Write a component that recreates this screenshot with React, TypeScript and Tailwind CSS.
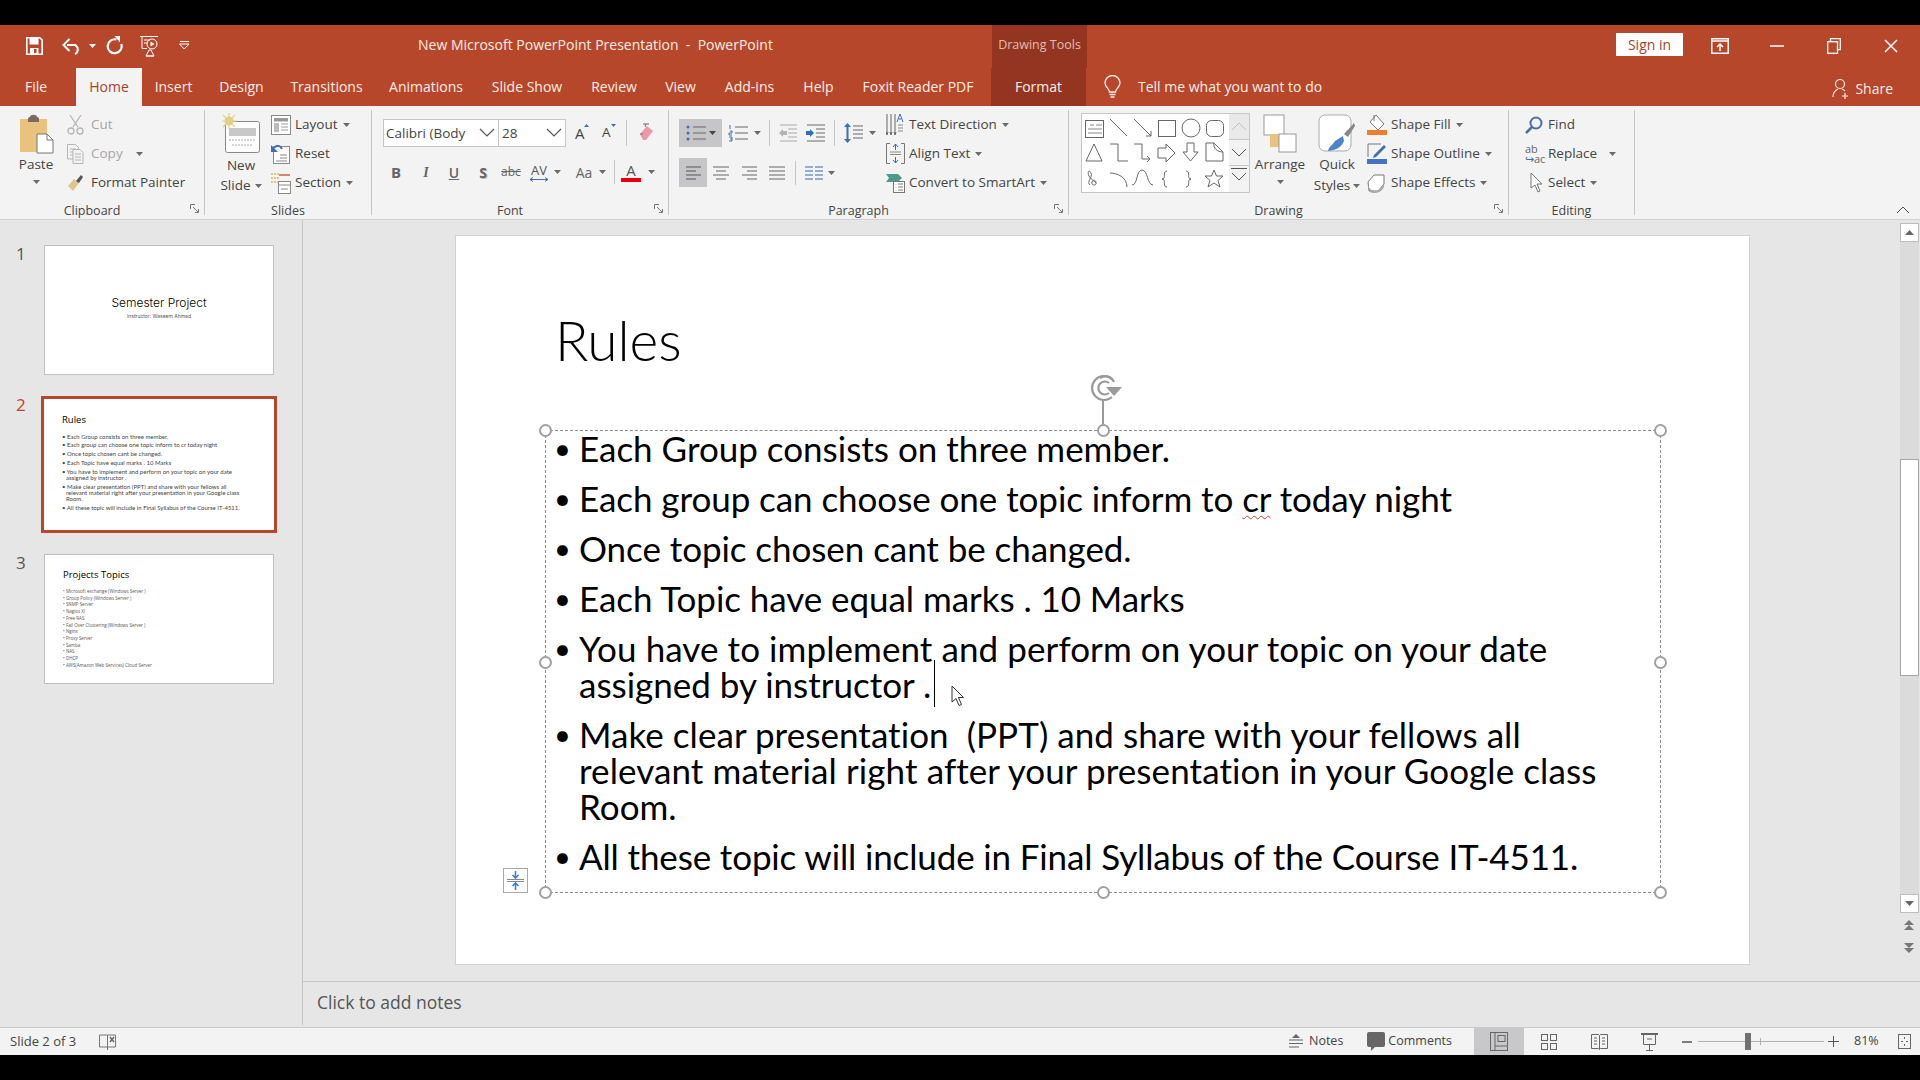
const stroke = "#6a6a6a";

function Caret({ color = "#6a6a6a" }: { color?: string }) {
  return (
    <svg width="7" height="4" viewBox="0 0 7 4" className="shrink-0">
      <path d="M0 0h7L3.5 4z" fill={color} />
    </svg>
  );
}

function Chevron() {
  return (
    <svg width="16" height="10" viewBox="0 0 16 10" className="shrink-0">
      <path d="M1 1l7 7 7-7" fill="none" stroke="#555" strokeWidth="1.2" />
    </svg>
  );
}

function Launcher() {
  return (
    <svg width="10" height="10" viewBox="0 0 10 10" className="absolute right-[4px] top-[3px]">
      <path d="M.5 5V.5H5M3 3l5 5M8.5 5v3.5H5" fill="none" stroke="#777" strokeWidth="1" />
    </svg>
  );
}

function Item({ icon, label, caret, muted, w = "w-[24px]", className = "" }: { icon: React.ReactNode; label: string; caret?: boolean; muted?: boolean; w?: string; className?: string }) {
  return (
    <div className={`h-[29px] flex items-center whitespace-nowrap ${className}`}>
      <div className={`${w} shrink-0 flex items-center`}>{icon}</div>
      <span className={muted ? "text-[#a6a6a6]" : ""}>{label}</span>
      {caret && <span className="ml-[5px]"><Caret /></span>}
    </div>
  );
}

function Group({ w, label, launcher, children }: { w: string; label: string; launcher?: boolean; children: React.ReactNode }) {
  return (
    <div className={`${w} h-[105px] shrink-0 flex flex-col border-r border-[#c6c6c6]`}>
      <div className="h-[91px] flex">{children}</div>
      <div className={`relative h-[14px] pt-[1px] leading-[17px] text-center text-[12.5px] text-[#444] ${launcher ? "pr-[20px]" : ""}`}>
        {label}
        {launcher && <Launcher />}
      </div>
    </div>
  );
}

function Tab({ label, w, className = "text-[#fbeee9]" }: { label: string; w: string; className?: string }) {
  return <div className={`${w} h-full shrink-0 flex items-center justify-center whitespace-nowrap ${className}`}>{label}</div>;
}

function Handle({ className }: { className: string }) {
  return <div className={`absolute w-[13px] h-[13px] rounded-full bg-white border-[2.5px] border-[#a0a0a0] ${className}`} />;
}

function ParaBtn({ children, className = "" }: { children: React.ReactNode; className?: string }) {
  return <div className={`flex items-center justify-center shrink-0 ${className}`}>{children}</div>;
}

function Gallery() {
  return (
    <svg width="147" height="78" viewBox="0 3 147 78" className="bg-white">
      <g fill="none" stroke="#666" strokeWidth="1">
        <rect x="3.5" y="9.5" width="18" height="17" />
        <path d="M8 14h4M14 14h6M6 18h14M6 22h14" stroke="#888" />
        <path d="M28 8l17 17" />
        <path d="M52 8l17 17M69 25v-5M69 25h-5" />
        <rect x="76.5" y="9.5" width="17" height="16" />
        <circle cx="109" cy="17" r="9" />
        <rect x="124.5" y="9.5" width="17" height="16" rx="5" />
        <g transform="translate(0,-6)">
          <path d="M12 39l8 17H4z" />
          <path d="M28 39h8v17h10" />
          <path d="M52 39h8v15h8M68 54l-3-3M68 54l-3 3" />
          <path d="M76 43h8v-4l9 9-9 9v-4h-8z" />
          <path d="M105 38h7v9h4l-7.500 9-7.500-9h4z" />
          <path d="M124 38h8l9 9v9h-17zM132 38c-1 5 3 9 9 9" />
        </g>
        <path d="M8 74c-4-3 3-8 1-12s-4-1-2 3 8 6 7 8-5 1-4-2 4-2 4 1" />
        <path d="M28 62c7 0 17 4 17 14" />
        <path d="M50 74c6 0 4-15 10-15s5 15 11 15" />
        <path d="M85 60c-4 0-2 6-3 7l-2 1 2 1c1 1-1 7 3 7" />
        <path d="M104 60c4 0 2 6 3 7l2 1-2 1c-1 1 1 7-3 7" />
        <path d="M132 59l2.500 6h6.500l-5 4.500 2 6.500-6-4-6 4 2-6.500-5-4.500h6.500z" />
      </g>
    </svg>
  );
}

const slide2Lines = [
  ["Each Group consists on three member.", "-mt-[1px]"],
  ["Each group can choose one topic inform to cr today night", "mt-[14px] tracking-[-0.06px]"],
  ["Once topic chosen cant be changed.", "mt-[14px] tracking-[-0.06px]"],
  ["Each Topic have equal marks . 10 Marks", "mt-[13.500px] tracking-[-0.06px]"],
  ["You have to implement and perform on your topic on your date", "mt-[14px] tracking-[0.08px]"],
  ["assigned by instructor .", "pl-[5px]"],
  ["Make clear presentation  (PPT) and share with your fellows all", "mt-[14px] tracking-[0.05px]"],
  ["relevant material right after your presentation in your Google class", "pl-[5px] tracking-[0.09px]"],
  ["Room.", "pl-[5px]"],
  ["All these topic will include in Final Syllabus of the Course IT-4511.", "mt-[14px] tracking-[-0.14px]"],
];

const slide3Lines = [
  "Microsoft exchange (Windows Server )",
  "Group Policy (Windows Server )",
  "SNMP Server",
  "Nagios XI",
  "Free RAS",
  "Fail Over Clustering (Windows Server )",
  "Nginx",
  "Proxy Server",
  "Samba",
  "NAS",
  "DHCP",
  "AWS(Amazon Web Services) Cloud Server",
];

function BodyLine({ text }: { text: string }) {
  if (text.includes(" cr ")) {
    const [a, b] = text.split(" cr ");
    return (
      <>
        {a} <span className="underline decoration-wavy decoration-[#d9403a] decoration-1 underline-offset-[3px]">cr</span> {b}
      </>
    );
  }
  return <>{text}</>;
}

export default function App() {
  return (
    <div className="w-[1920px] h-[1080px] overflow-hidden bg-black flex flex-col font-['Open_Sans',sans-serif] text-[13.5px] text-[#444]">
      <div className="h-[25px] shrink-0" />

      {/* title bar */}
      <div className="h-[43px] shrink-0 bg-[#b7472a] flex text-[#fbeee9]">
        <div className="w-[418px] shrink-0 flex items-center pl-[26px] pb-[2px]">
          <svg width="17" height="18" viewBox="0 0 17 18">
            <path d="M.8.8h13l2.400 2.400v14H.8z" fill="none" stroke="#fff" strokeWidth="1.600" />
            <path d="M3.500 1v6.500h9V1zM4 17v-6h8.500v6z" fill="#fff" />
            <rect x="8" y="12" width="2.500" height="4" fill="#b7472a" />
          </svg>
          <svg width="20" height="18" viewBox="0 0 20 18" className="ml-[19px]">
            <path d="M5 8h8a5 5 0 0 1 0 9" fill="none" stroke="#fff" strokeWidth="2" />
            <path d="M7.500 2L1.500 8l6 6" fill="none" stroke="#fff" strokeWidth="2" />
          </svg>
          <span className="ml-[7px]"><Caret color="#fff" /></span>
          <svg width="17" height="19" viewBox="0 0 17 19" className="ml-[10px]">
            <path d="M10.500 3.500A7 7 0 1 0 15.300 8" fill="none" stroke="#fff" strokeWidth="2.200" />
            <path d="M8.500 0h5.500v6.500z" fill="#fff" />
          </svg>
          <svg width="21" height="22" viewBox="0 0 21 22" className="ml-[16px]">
            <g fill="none" stroke="#fff" strokeWidth="1">
              <path d="M1 1.500h18M3 1.500v12h5M5 5h6M5 8h3" />
              <circle cx="13" cy="9" r="5" />
              <path d="M7 21l3-6h2l3 6zM7 21h8" />
            </g>
            <path d="M11.500 6.500v5l4-2.500z" fill="#fff" />
          </svg>
          <svg width="11" height="9" viewBox="0 0 11 9" className="ml-[19px]">
            <path d="M.5 3h9.500L5.250 8zM1 .5h9" fill="none" stroke="#fff" strokeWidth="1" />
          </svg>
        </div>
        <div className="w-[574px] shrink-0 flex items-center pb-[4px] text-[14px] whitespace-pre">New Microsoft PowerPoint Presentation  -  PowerPoint</div>
        <div className="w-[95px] shrink-0 bg-[#943522] flex items-center justify-center pb-[2px] text-[12.5px] text-[#e2bcae] whitespace-nowrap">Drawing Tools</div>
        <div className="flex-1" />
        <div className="w-[67px] h-[23px] mt-[8px] shrink-0 bg-white flex items-center justify-center pb-[1px] text-[14px] text-[#a8412c]">Sign in</div>
        <div className="w-[57px] ml-[8px] shrink-0 flex items-center justify-center pb-[2px]">
          <svg width="18" height="16" viewBox="0 0 18 16">
            <rect x=".75" y=".75" width="16.500" height="14.500" fill="none" stroke="#fff" strokeWidth="1.500" />
            <path d="M1 3h16" stroke="#fff" strokeWidth="1.500" />
            <path d="M9 13V6M6 9l3-3 3 3" fill="none" stroke="#fff" strokeWidth="1.500" />
          </svg>
        </div>
        <div className="w-[57px] shrink-0 flex items-center justify-center pb-[2px]">
          <svg width="14" height="2" viewBox="0 0 14 2"><path d="M0 1h14" stroke="#fff" strokeWidth="1.500" /></svg>
        </div>
        <div className="w-[57px] shrink-0 flex items-center justify-center pb-[2px]">
          <svg width="14" height="16" viewBox="0 0 14 16">
            <path d="M3.500 3V.7h9.800v11H10" fill="none" stroke="#fff" strokeWidth="1.300" />
            <rect x=".7" y="3.700" width="9.800" height="11.600" fill="none" stroke="#fff" strokeWidth="1.300" />
          </svg>
        </div>
        <div className="w-[58px] shrink-0 flex items-center justify-center pb-[2px]">
          <svg width="14" height="14" viewBox="0 0 14 14"><path d="M1 1l12 12M13 1L1 13" stroke="#fff" strokeWidth="1.500" /></svg>
        </div>
      </div>

      {/* ribbon tabs */}
      <div className="h-[38px] shrink-0 bg-[#b7472a] flex items-center text-[14px]">
        <Tab label="File" w="w-[76px]" className="text-[#fbeee9] pr-[4px] pb-[1px]" />
        <Tab label="Home" w="w-[66px]" className="bg-[#f3f3f3] text-[#a8412c] pb-[1px]" />
        <Tab label="Insert" w="w-[63px]" className="text-[#fbeee9] pb-[1px]" />
        <Tab label="Design" w="w-[73px]" className="text-[#fbeee9] pb-[1px]" />
        <Tab label="Transitions" w="w-[97px]" className="text-[#fbeee9] pb-[1px]" />
        <Tab label="Animations" w="w-[102px]" className="text-[#fbeee9] pb-[1px]" />
        <Tab label="Slide Show" w="w-[100px]" className="text-[#fbeee9] pb-[1px]" />
        <Tab label="Review" w="w-[74px]" className="text-[#fbeee9] pb-[1px]" />
        <Tab label="View" w="w-[59px]" className="text-[#fbeee9] pb-[1px]" />
        <Tab label="Add-ins" w="w-[79px]" className="text-[#fbeee9] pb-[1px]" />
        <Tab label="Help" w="w-[59px]" className="text-[#fbeee9] pb-[1px]" />
        <Tab label="Foxit Reader PDF" w="w-[143px]" className="text-[#fbeee9] pr-[3px] pb-[1px]" />
        <Tab label="Format" w="w-[95px]" className="bg-[#943522] text-[#fbeee9] pb-[1px]" />
        <svg width="17" height="24" viewBox="0 0 17 24" className="ml-[18px] shrink-0">
          <path d="M5.500 17c0-3-4.500-5-4.500-9a7.500 7.500 0 0 1 15 0c0 4-4.500 6-4.500 9z" fill="none" stroke="#fbeee9" strokeWidth="1.300" />
          <path d="M5.500 19.500h6M6.500 22h4" stroke="#fbeee9" strokeWidth="1.600" />
        </svg>
        <span className="ml-[17px] pb-[1px] text-[#fbeee9] whitespace-nowrap">Tell me what you want to do</span>
        <div className="flex-1" />
        <svg width="18" height="22" viewBox="0 0 18 22" className="shrink-0 mt-[3px]">
          <g fill="none" stroke="#fbeee9" strokeWidth="1.200">
            <circle cx="8" cy="6" r="4.500" />
            <path d="M1 19c0-5 3-7 5-8M10 11c1 .4 2 1 3 2M13 15v6M10 18h6" />
          </g>
        </svg>
        <span className="ml-[5px] mr-[27px] mt-[3px] text-[#fbeee9]">Share</span>
      </div>

      {/* ribbon */}
      <div className="h-[114px] shrink-0 bg-[#f3f3f3] border-b border-[#d2d2d2] pt-[4px] flex relative">
        <Group w="w-[205px]" label="Clipboard" launcher>
          <div className="w-[48px] ml-[12px] shrink-0 flex flex-col items-center">
            <svg width="35" height="40" viewBox="0 0 35 40" className="mt-[4px]">
              <rect x="1" y="5" width="27" height="33" fill="#e9c27d" />
              <path d="M9 5c0-2 2-2 2-2 0-3 7-3 7 0 0 0 2 0 2 2v3H9z" fill="#7c6a5c" />
              <path d="M18 20h10l6 6v13H18z" fill="#fff" stroke="#777" />
              <path d="M28 20v6h6" fill="none" stroke="#777" />
            </svg>
            <div className="h-[21px] leading-[21px]">Paste</div>
            <div className="mt-[5px]"><Caret /></div>
          </div>
          <div className="ml-[7px] flex flex-col">
            <Item muted label="Cut" icon={
              <svg width="17" height="21" viewBox="0 0 17 21"><g fill="none" stroke="#b5b5b5" strokeWidth="1.300"><path d="M3 1l8 12M14 1L6 13" /><circle cx="4" cy="17" r="3" /><circle cx="13" cy="17" r="3" /></g></svg>
            } />
            <Item muted label="Copy" icon={
              <svg width="17" height="20" viewBox="0 0 17 20"><g fill="none" stroke="#b5b5b5"><path d="M.5.500h8l3 3V15H.5zM3 5h6M3 8h6M3 11h6" /><path d="M6 5.500h7l3 3v11H6z" fill="#f3f3f3" /><path d="M8 10h6M8 13h6M8 16h6" /></g></svg>
            } className="[&>span:nth-child(3)]:ml-[13px]" caret />
            <Item label="Format Painter" icon={
              <svg width="17" height="17" viewBox="0 0 17 17"><path d="M1 12l6-7 5 4-6 8z" fill="#dcc983" /><path d="M9 7l5-6 2 2-4 6z" fill="#555" /></svg>
            } />
          </div>
        </Group>

        <Group w="w-[167px]" label="Slides">
          <div className="w-[48px] ml-[12px] shrink-0 flex flex-col items-center">
            <svg width="38" height="41" viewBox="0 0 38 41" className="mt-[3px]">
              <rect x="3.500" y="8.500" width="34" height="31" rx="2" fill="#fff" stroke="#888" />
              <rect x="7" y="15" width="27" height="8" fill="#c8c8c8" />
              <path d="M7 27h27M10 32h21" stroke="#aaa" strokeDasharray="2 1" />
              <circle cx="7" cy="8" r="4.500" fill="#e3cf85" />
              <path d="M7 0v16M-1 8h16M1 2l12 12M13 2L1 14" stroke="#e3cf85" strokeWidth="1.200" />
            </svg>
            <div className="h-[20px] leading-[20px] mt-[1px]">New</div>
            <div className="h-[21px] leading-[21px] flex items-center whitespace-nowrap">Slide<span className="ml-[4px]"><Caret /></span></div>
          </div>
          <div className="ml-[6px] flex flex-col">
            <Item label="Layout" caret icon={
              <svg width="20" height="20" viewBox="0 0 20 20"><rect x=".5" y=".5" width="19" height="19" fill="#fff" stroke="#888" /><rect x="3" y="3" width="14" height="3.500" fill="#999" /><rect x="3" y="8" width="5" height="9" fill="#bbb" /><path d="M10 9h7M10 12h7M10 15h7" stroke="#999" /></svg>
            } />
            <Item label="Reset" icon={
              <svg width="19" height="21" viewBox="0 0 19 21"><rect x="2.500" y="3.500" width="16" height="17" fill="#fff" stroke="#888" /><path d="M9 12h7M9 15h7M5 18h11" stroke="#888" /><path d="M11 6C9 2 5 2 3 5" fill="none" stroke="#3f6fb0" strokeWidth="2" /><path d="M0 2v7h7z" fill="#3f6fb0" /></svg>
            } />
            <Item label="Section" caret icon={
              <svg width="20" height="22" viewBox="0 0 20 22"><path d="M0 2h8M0 6h8M0 10h8" stroke="#e3c58b" strokeWidth="2" strokeDasharray="2 1" /><path d="M8 3h11" stroke="#d0603a" strokeWidth="1.500" /><rect x="7.500" y="9.500" width="12" height="12" fill="#fff" stroke="#888" /><path d="M7 13h12M10 17h7" stroke="#888" /></svg>
            } />
          </div>
        </Group>

        <Group w="w-[297px]" label="Font" launcher>
          <div className="flex flex-col pl-[11px]">
            <div className="flex items-center mt-[9px] h-[28px]">
              <div className="w-[116px] h-[28px] bg-white border border-[#c6c6c6] flex items-center justify-between pl-[2px] pr-[3px] text-[13.5px] whitespace-nowrap overflow-hidden">
                Calibri (Body<Chevron />
              </div>
              <div className="w-[67px] h-[28px] bg-white border border-l-0 border-[#c6c6c6] flex items-center justify-between pl-[3px] pr-[3px]">
                28<Chevron />
              </div>
              <div className="w-[13px] ml-[9px] text-[15px] leading-none relative">A<span className="absolute -right-[1px] top-[-2px]"><svg width="5" height="3" viewBox="0 0 5 3"><path d="M0 3h5L2.500 0z" fill="#3f6fb0" /></svg></span></div>
              <div className="w-[13px] ml-[14px] text-[13.5px] leading-none relative">A<span className="absolute -right-[1px] top-[-2px]"><svg width="5" height="3" viewBox="0 0 5 3"><path d="M0 0h5L2.500 3z" fill="#3f6fb0" /></svg></span></div>
              <div className="w-px h-[26px] bg-[#c6c6c6] ml-[11px]" />
              <svg width="18" height="20" viewBox="0 0 18 20" className="ml-[10px] shrink-0">
                <path d="M3 11l7-8 6 5-7 9H6z" fill="#ee97a6" />
                <path d="M3 11h3M8 4l1-3" stroke="#777" />
                <path d="M6 1h6" stroke="#666" />
              </svg>
            </div>
            <div className="flex items-center mt-[11px] h-[28px] text-[14px] font-bold text-[#666]">
              <div className="w-[14px] ml-[6px] text-center text-[15px]">B</div>
              <div className="w-[14px] ml-[16px] text-center italic font-semibold font-['Liberation_Serif',serif]">I</div>
              <div className="w-[14px] ml-[14px] text-center underline font-semibold">U</div>
              <div className="w-[14px] ml-[15px] text-center [text-shadow:1px_1px_0_#bbb]">S</div>
              <div className="w-[22px] ml-[10px] text-center line-through font-normal text-[12px]">abc</div>
              <div className="w-[18px] ml-[8px] relative text-center font-normal text-[13px] text-[#555] leading-[14px]">
                AV
                <svg width="18" height="5" viewBox="0 0 18 5" className="block"><path d="M0 2.500h18M3 .5l-3 2 3 2M15 .5l3 2-3 2" fill="none" stroke="#3f6fb0" /></svg>
              </div>
              <span className="ml-[6px]"><Caret /></span>
              <div className="w-[20px] ml-[13px] text-center font-normal text-[14px]">Aa</div>
              <span className="ml-[5px]"><Caret /></span>
              <div className="w-px h-[24px] bg-[#c6c6c6] ml-[8px]" />
              <div className="w-[20px] ml-[6px] text-center font-normal text-[15px] leading-[15px] text-[#555]">
                A
                <div className="h-[4px] w-[20px] bg-[#e8000b]" />
              </div>
              <span className="ml-[7px]"><Caret /></span>
            </div>
          </div>
        </Group>

        <Group w="w-[400px]" label="Paragraph" launcher>
          <div className="w-[217px] shrink-0 flex flex-col pl-[10px]">
            <div className="flex items-center mt-[9px] h-[28px]">
              <ParaBtn className="w-[43px] h-[28px] bg-[#c6c6c8] gap-[3px]">
                <svg width="20" height="18" viewBox="0 0 20 18">
                  <g fill="#3f6fb0"><circle cx="2" cy="3" r="1.500" /><circle cx="2" cy="9" r="1.500" /><circle cx="2" cy="15" r="1.500" /></g>
                  <path d="M7 3h13M7 9h13M7 15h13" stroke="#666" />
                </svg>
                <Caret color="#444" />
              </ParaBtn>
              <ParaBtn className="w-[36px] ml-[4px] gap-[6px]">
                <svg width="20" height="18" viewBox="0 0 20 18">
                  <path d="M2 1v4M2 7h2v2H1v2h3M1 13h3v4H1M2 15h2" stroke="#3f6fb0" fill="none" />
                  <path d="M7 3h13M7 9h13M7 15h13" stroke="#666" />
                </svg>
                <Caret />
              </ParaBtn>
              <div className="w-px h-[26px] bg-[#c6c6c6] ml-[7px]" />
              <svg width="18" height="18" viewBox="0 0 18 18" className="ml-[9px] shrink-0">
                <path d="M1 1h17M9 5h9M9 9h9M9 13h9M1 17h17" stroke="#aaa" />
                <path d="M0 9l4-4v2h4v4H4v2z" fill="#b3b3b3" />
              </svg>
              <svg width="19" height="18" viewBox="0 0 19 18" className="ml-[9px] shrink-0">
                <path d="M1 1h18M10 5h9M10 9h9M10 13h9M1 17h18" stroke={stroke} />
                <path d="M8 9L4 5v2H0v4h4v2z" fill="#2f6db5" />
              </svg>
              <div className="w-px h-[26px] bg-[#c6c6c6] ml-[9px]" />
              <svg width="19" height="22" viewBox="0 0 19 22" className="ml-[9px] shrink-0">
                <path d="M3.500 2v18" stroke="#3f6fb0" strokeWidth="2" />
                <path d="M0 5l3.500-4L7 5zM0 17l3.500 4L7 17z" fill="#3f6fb0" />
                <path d="M9 4h10M9 8h10M9 12h10M9 16h10" stroke="#666" />
              </svg>
              <span className="ml-[6px]"><Caret /></span>
            </div>
            <div className="flex items-center mt-[11px] h-[29px]">
              <ParaBtn className="w-[28px] h-[29px] bg-[#c6c6c8]">
                <svg width="15" height="14" viewBox="0 0 15 14"><path d="M0 1h15M0 5h10M0 9h15M0 13h10" stroke="#555" /></svg>
              </ParaBtn>
              <svg width="16" height="14" viewBox="0 0 16 14" className="ml-[6px] shrink-0"><path d="M0 1h16M3 5h10M0 9h16M3 13h10" stroke="#666" /></svg>
              <svg width="15" height="14" viewBox="0 0 15 14" className="ml-[13px] shrink-0"><path d="M0 1h15M5 5h10M0 9h15M5 13h10" stroke="#666" /></svg>
              <svg width="16" height="14" viewBox="0 0 16 14" className="ml-[12px] shrink-0"><path d="M0 1h16M0 5h16M0 9h16M0 13h16" stroke="#666" /></svg>
              <div className="w-px h-[24px] bg-[#c6c6c6] ml-[10px]" />
              <svg width="18" height="14" viewBox="0 0 18 14" className="ml-[9px] shrink-0"><path d="M0 1h8M0 5h8M0 9h8M0 13h8M10 1h8M10 5h8M10 9h8M10 13h8" stroke="#2f6db5" /></svg>
              <span className="ml-[5px]"><Caret /></span>
            </div>
          </div>
          <div className="flex flex-col">
            <Item w="w-[23px]" label="Text Direction" caret icon={
              <svg width="19" height="25" viewBox="0 0 19 25"><path d="M1 2v19M5 2v19M9 2v19" stroke="#666" /><path d="M0 20l1 3 1-3M4 20l1 3 1-3M8 20l1 3 1-3" stroke="#666" fill="none" /><path d="M11 10l3-8 3 8M12.500 7h3" stroke="#3f6fb0" fill="none" /><path d="M12 13h5M12 16h5M12 19h5" stroke="#888" /></svg>
            } />
            <Item w="w-[23px]" label="Align Text" caret icon={
              <svg width="19" height="21" viewBox="0 0 19 21"><path d="M4 .5H.5v20H4M15 .5h3.500v20H15" stroke="#777" fill="none" /><path d="M9.500 1v6M7 4l2.500-3L12 4M9.500 20v-6M7 17l2.500 3 2.500-3" stroke="#2f6db5" fill="none" /><path d="M4 9h11M4 11.500h11" stroke="#888" /></svg>
            } />
            <Item w="w-[23px]" label="Convert to SmartArt" caret icon={
              <svg width="19" height="20" viewBox="0 0 19 20"><path d="M0 1h12l4 4-4 4H0l3-4z" fill="#4f9a8a" /><rect x="7.500" y="8.500" width="11" height="11" fill="#fff" stroke="#777" /><path d="M10 11v.5M10 14v.5M10 17v.5M12 11h5M12 14h5M12 17h5" stroke="#777" /></svg>
            } />
          </div>
        </Group>

        <Group w="w-[440px]" label="Drawing" launcher>
          <div className="flex mt-[3px] ml-[12px] h-[78px] border border-[#c6c6c6] w-[167px] shrink-0 box-content -mx-px">
            <Gallery />
            <div className="w-[20px] flex flex-col">
              <div className="h-[26px] bg-[#e9e9e9] border-b border-[#c6c6c6] flex items-center justify-center">
                <svg width="16" height="9" viewBox="0 0 16 9"><path d="M1 8l7-7 7 7" fill="none" stroke="#c0c0c0" /></svg>
              </div>
              <div className="h-[26px] border-b border-[#c6c6c6] flex items-center justify-center">
                <svg width="16" height="9" viewBox="0 0 16 9"><path d="M1 1l7 7 7-7" fill="none" stroke="#555" /></svg>
              </div>
              <div className="h-[26px] flex flex-col items-center gap-[3px] pt-[2px]">
                <div className="w-[16px] h-px bg-[#555]" />
                <svg width="16" height="9" viewBox="0 0 16 9"><path d="M1 1l7 7 7-7" fill="none" stroke="#555" /></svg>
              </div>
            </div>
          </div>
          <div className="w-[52px] ml-[5px] shrink-0 flex flex-col items-center">
            <svg width="34" height="40" viewBox="0 0 34 40" className="mt-[4px]">
              <rect x="1" y="1" width="20" height="20" fill="#fff" stroke="#999" />
              <rect x="7" y="20" width="20" height="13" fill="#e9c27d" />
              <rect x="16" y="20" width="17" height="18" fill="#fff" stroke="#999" />
            </svg>
            <div className="h-[21px] leading-[21px]">Arrange</div>
            <div className="mt-[5px]"><Caret /></div>
          </div>
          <div className="w-[52px] ml-[5px] shrink-0 flex flex-col items-center">
            <svg width="38" height="40" viewBox="0 0 38 40" className="mt-[4px]">
              <rect x="1" y="1" width="32" height="36" rx="6" fill="#fff" stroke="#aaa" />
              <path d="M26 20l10-11 1 3-7 11z" fill="#888" />
              <path d="M10 37c1-5 5-6 7-10l8-5 1 5c-2 5-6 9-16 10z" fill="#4a86c5" />
            </svg>
            <div className="h-[21px] leading-[21px]">Quick</div>
            <div className="h-[21px] leading-[21px] flex items-center">Styles<span className="ml-[3px]"><Caret /></span></div>
          </div>
          <div className="ml-[4px] flex flex-col">
            <Item label="Shape Fill" caret icon={
              <svg width="20" height="21" viewBox="0 0 20 21"><path d="M9 1l8 9-6 6-8-8z" fill="#fff" stroke="#777" /><path d="M7 1v6" stroke="#777" /><rect y="16" width="20" height="5" fill="#ed7d31" /></svg>
            } />
            <Item label="Shape Outline" caret icon={
              <svg width="20" height="21" viewBox="0 0 20 21"><path d="M14 1H1v13" fill="none" stroke="#777" /><path d="M7 12L17 2l2 2L9 14l-3 1z" fill="#3f6fb0" /><rect y="16" width="20" height="5" fill="#4472c4" /></svg>
            } />
            <Item label="Shape Effects" caret icon={
              <svg width="18" height="20" viewBox="0 0 18 20"><path d="M1 9l6-7h10v9l-6 7H2z" fill="#fff" stroke="#777" /><path d="M1 12c2 6 8 7 10 6l6-7v3c-3 6-8 6-11 6s-5-3-5-8z" fill="#aaa" /></svg>
            } />
          </div>
        </Group>

        <Group w="w-[126px]" label="Editing">
          <div className="ml-[16px] flex flex-col">
            <Item w="w-[23px]" label="Find" icon={
              <svg width="18" height="18" viewBox="0 0 18 18"><circle cx="11" cy="7" r="5.500" fill="none" stroke="#4a6fa5" strokeWidth="2" /><path d="M7 11l-6 6" stroke="#4a6fa5" strokeWidth="2.500" /></svg>
            } />
            <Item w="w-[23px]" label="Replace" icon={
              <span className="text-[11px] leading-[10px] text-[#666]">ab<br /><span className="text-[#3f6fb0]">↪</span>ac</span>
            } className="[&>span:last-child]:ml-[12px]" caret />
            <Item w="w-[23px]" label="Select" caret icon={
              <svg width="13" height="21" viewBox="0 0 13 21" className="ml-[5px]"><path d="M1 1v15l4-3 3 7 2-1-3-7h5z" fill="#fff" stroke="#777" /></svg>
            } />
          </div>
        </Group>

        <svg width="14" height="8" viewBox="0 0 14 8" className="absolute right-[10px] bottom-[5px]"><path d="M1 7l6-6 6 6" fill="none" stroke="#555" /></svg>
      </div>

      {/* workspace */}
      <div className="h-[807px] shrink-0 bg-[#e6e6e7] flex">
        <div className="w-[303px] shrink-0 h-[805px] border-r border-[#c6c6c6] flex flex-col pt-[25px]">
          <div className="flex h-[130px]">
            <div className="w-[44px] pl-[16px] -mt-[3px] text-[17px] leading-[24px] text-[#555]">1</div>
            <div className="w-[230px] h-[130px] bg-white border border-[#c0c0c0] flex flex-col items-center pt-[49px] font-['Inter',sans-serif] text-black">
              <div className="text-[12px] leading-[16px] font-light">Semester Project</div>
              <div className="text-[5px] leading-[7px] mt-[2px] text-[#555]">Instructor: Waseem Ahmad</div>
            </div>
          </div>
          <div className="flex h-[137px] mt-[21px]">
            <div className="w-[41px] pl-[16px] -mt-[3px] text-[17px] leading-[24px] text-[#b7472a]">2</div>
            <div className="w-[236px] h-[137px] border-[3px] border-[#b7472a] bg-white flex flex-col pl-[18px] text-black">
              <div className="text-[9.500px] leading-[12px] mt-[15px]">Rules</div>
              <div className="text-[6px] text-[#444] mt-[7px] leading-[6px] flex flex-col whitespace-nowrap font-['Lato',sans-serif]">
                <div className="mt-[1px]">• Each Group consists on three member.</div>
                <div className="mt-[2px]">• Each group can choose one topic inform to cr today night</div>
                <div className="mt-[3px]">• Once topic chosen cant be changed.</div>
                <div className="mt-[3px]">• Each Topic have equal marks . 10 Marks</div>
                <div className="mt-[3px]">• You have to implement and perform on your topic on your date</div>
                <div className="pl-[4px]">assigned by instructor .</div>
                <div className="mt-[3px]">• Make clear presentation  (PPT) and share with your fellows all</div>
                <div className="pl-[4px]">relevant material right after your presentation in your Google class</div>
                <div className="pl-[4px]">Room.</div>
                <div className="mt-[3px]">• All these topic will include in Final Syllabus of the Course IT-4511.</div>
              </div>
            </div>
          </div>
          <div className="flex h-[130px] mt-[21px]">
            <div className="w-[44px] pl-[16px] -mt-[3px] text-[17px] leading-[24px] text-[#555]">3</div>
            <div className="w-[230px] h-[130px] bg-white border border-[#c0c0c0] flex flex-col pl-[18px] text-black">
              <div className="text-[9.500px] leading-[12px] mt-[14px]">Projects Topics</div>
              <div className="text-[4.500px] text-[#555] mt-[7px] leading-[6.700px] whitespace-nowrap">
                {slide3Lines.map((l) => <div key={l}>• {l}</div>)}
              </div>
            </div>
          </div>
        </div>

        <div className="flex-1 flex flex-col min-w-0">
          <div className="h-[762px] shrink-0 flex border-b border-[#c6c6c6]">
            <div className="flex-1 pl-[152px] pt-[15px] relative min-w-0">
              <div className="relative w-[1295px] h-[730px] bg-white border border-[#d0d0d0] font-['Lato',sans-serif] text-black">
                <div className="pl-[99px] pt-[69px] text-[55px] leading-[70px] font-light">Rules</div>
                {/* rotate handle */}
                <div className="absolute left-[634px] top-[138px] w-[32px] h-[56px] flex flex-col items-start">
                  <svg width="32" height="27" viewBox="0 0 32 27">
                    <g fill="none" stroke="#9a9a9a" strokeWidth="2.200">
                      <path d="M22 5A12 12 0 1 0 22 23" />
                      <path d="M19 9a6.500 6.500 0 1 0 0 10" />
                      <path d="M10 4c5-3 11-2 14 4" />
                    </g>
                    <path d="M16 13h16l-8 9z" fill="#9a9a9a" />
                  </svg>
                  <div className="w-[2px] ml-[12px] flex-1 bg-[#9a9a9a]" />
                </div>
                <div className="absolute left-[89px] top-[194px] w-[1116px] h-[463px] border border-dashed border-[#8c8c8c]">
                  <Handle className="-left-[7px] -top-[7px]" />
                  <Handle className="left-[551px] -top-[7px]" />
                  <Handle className="-right-[7px] -top-[7px]" />
                  <Handle className="-left-[7px] top-[225px]" />
                  <Handle className="-right-[7px] top-[225px]" />
                  <Handle className="-left-[7px] -bottom-[7px]" />
                  <Handle className="left-[551px] -bottom-[7px]" />
                  <Handle className="-right-[7px] -bottom-[7px]" />
                  <div className="absolute -left-[43px] bottom-[-1px] w-[25px] h-[25px] border border-[#a8a8a8] bg-white flex items-center justify-center">
                    <svg width="19" height="19" viewBox="0 0 19 19">
                      <path d="M1 8.500h17M1 10.500h17" stroke="#888" />
                      <path d="M9.500 0v7M6.500 4l3 3 3-3M9.500 19v-7M6.500 15l3-3 3 3" fill="none" stroke="#3f7fd0" strokeWidth="1.600" />
                    </svg>
                  </div>
                  <div className="pl-[8px] text-[35px] leading-[36px] whitespace-pre [font-variant-ligatures:none]">
                    {slide2Lines.map(([t, c], i) => {
                      const hasBullet = !c.includes("pl-[5px]");
                      return (
                        <div key={i} className={`${c} flex`}>
                          {hasBullet && <span className="w-[25px] shrink-0 text-[29px]">•</span>}
                          <span className={`relative ${hasBullet ? "" : "pl-[20px]"}`}>
                            <BodyLine text={t} />
                            {i === 5 && <span className="absolute -right-[4px] -top-[6px] w-px h-[47px] bg-black" />}
                          </span>
                        </div>
                      );
                    })}
                  </div>
                </div>
                <svg width="14" height="22" viewBox="0 0 14 22" className="absolute left-[495px] top-[449px]">
                  <path d="M1 1v16l4-3.500 3 7 2.500-1-3-7h5z" fill="#fff" stroke="#333" strokeWidth="1" />
                </svg>
              </div>
            </div>
            <div className="w-[22px] shrink-0 flex flex-col pl-[2px] pt-[3px]">
              <div className="w-[19px] h-[19px] bg-white border border-[#bdbdbd] flex items-center justify-center">
                <svg width="9" height="5" viewBox="0 0 9 5"><path d="M0 5h9L4.500 0z" fill="#666" /></svg>
              </div>
              <div className="w-[19px] h-[652px] bg-[#dcdbdc] flex flex-col">
                <div className="h-[217px]" />
                <div className="h-[217px] bg-white border border-[#a6a6a6]" />
              </div>
              <div className="w-[19px] h-[19px] bg-white border border-[#bdbdbd] flex items-center justify-center">
                <svg width="9" height="5" viewBox="0 0 9 5"><path d="M0 0h9L4.500 5z" fill="#666" /></svg>
              </div>
              <svg width="10" height="11" viewBox="0 0 10 11" className="mt-[7px] ml-[4px]"><path d="M0 5h10L5 0zM0 10h10L5 5z" fill="#777" /></svg>
              <svg width="10" height="11" viewBox="0 0 10 11" className="mt-[11px] ml-[4px]"><path d="M0 1h10L5 6zM0 6h10L5 11z" fill="#777" /></svg>
            </div>
          </div>
          <div className="h-[45px] shrink-0 pl-[14px] pb-[4px] flex items-center text-[17.500px] text-[#555]">Click to add notes</div>
        </div>
      </div>

      {/* status bar */}
      <div className="h-[28px] shrink-0 bg-[#f3f3f3] border-t border-[#c9c9c9] flex items-center text-[13px] text-[#444]">
        <span className="pl-[10px]">Slide 2 of 3</span>
        <svg width="18" height="17" viewBox="0 0 18 17" className="ml-[23px]">
          <path d="M8.500 2H.5v12h8V2zM8.500 2h8v12h-8" fill="none" stroke="#777" />
          <path d="M11 4l4 5M15 4l-4 5" stroke="#666" strokeWidth="1.500" />
          <path d="M8.500 14v3" stroke="#777" />
        </svg>
        <div className="flex-1" />
        <svg width="14" height="17" viewBox="0 0 14 17">
          <path d="M3 5l4-4 4 4z" fill="#666" />
          <path d="M0 7h14M0 10.500h14M0 14h10" stroke="#666" />
        </svg>
        <span className="ml-[6px] text-[12.5px]">Notes</span>
        <svg width="18" height="19" viewBox="0 0 18 19" className="ml-[24px]">
          <path d="M2 0h14a2 2 0 0 1 2 2v11a2 2 0 0 1-2 2H8l-4 4v-4H2a2 2 0 0 1-2-2V2a2 2 0 0 1 2-2z" fill="#666" />
        </svg>
        <span className="ml-[3px] text-[12.5px]">Comments</span>
        <div className="w-[50px] h-full ml-[22px] bg-[#c8c8ca] flex items-center justify-center">
          <svg width="18" height="19" viewBox="0 0 18 19"><g fill="none" stroke="#666"><rect x=".5" y=".5" width="17" height="18" /><path d="M5 .5v18M5 14h13" /><rect x="8" y="3.500" width="7" height="6" /></g></svg>
        </div>
        <div className="w-[50px] h-full flex items-center justify-center">
          <svg width="16" height="16" viewBox="0 0 16 16"><g fill="none" stroke="#666"><rect x=".5" y=".5" width="6" height="6" /><rect x="9.500" y=".5" width="6" height="6" /><rect x=".5" y="9.500" width="6" height="6" /><rect x="9.500" y="9.500" width="6" height="6" /></g></svg>
        </div>
        <div className="w-[50px] h-full flex items-center justify-center">
          <svg width="17" height="18" viewBox="0 0 17 18"><g fill="none" stroke="#666"><path d="M.5 1.500h7l1 1 1-1h7v14h-7l-1 1-1-1h-7zM8.500 2.500v14" /><path d="M3 5h3M3 8h3M3 11h3M11 5h3M11 8h3M11 11h3" /></g></svg>
        </div>
        <div className="w-[50px] h-full flex items-center justify-center">
          <svg width="17" height="18" viewBox="0 0 17 18"><g fill="none" stroke="#666"><path d="M0 1h17" strokeWidth="2" /><path d="M2.500 2v9.500h12V2M8.500 11.500v6M5 17.500h7M6 6h5" /></g></svg>
        </div>
        <svg width="10" height="2" viewBox="0 0 10 2" className="ml-[8px]"><path d="M0 1h10" stroke="#555" strokeWidth="1.500" /></svg>
        <div className="w-[126px] h-px bg-[#b0b0b0] ml-[6px] relative">
          <div className="absolute left-[47px] -top-[8px] w-[6px] h-[17px] bg-[#707070]" />
          <div className="absolute left-[62px] -top-[3px] w-px h-[7px] bg-[#b0b0b0]" />
        </div>
        <svg width="11" height="11" viewBox="0 0 11 11" className="ml-[4px]"><path d="M0 5.500h11M5.500 0v11" stroke="#555" /></svg>
        <span className="ml-[15px] w-[26px] text-[12.5px]">81%</span>
        <svg width="13" height="15" viewBox="0 0 13 15" className="ml-[18px] mr-[9px]">
          <g fill="none" stroke="#666"><rect x=".5" y=".5" width="12" height="14" /><path d="M6.500 3v2M6.500 10v2M3 7.500h2M8 7.500h2" /></g>
        </svg>
      </div>

      <div className="flex-1" />
    </div>
  );
}
